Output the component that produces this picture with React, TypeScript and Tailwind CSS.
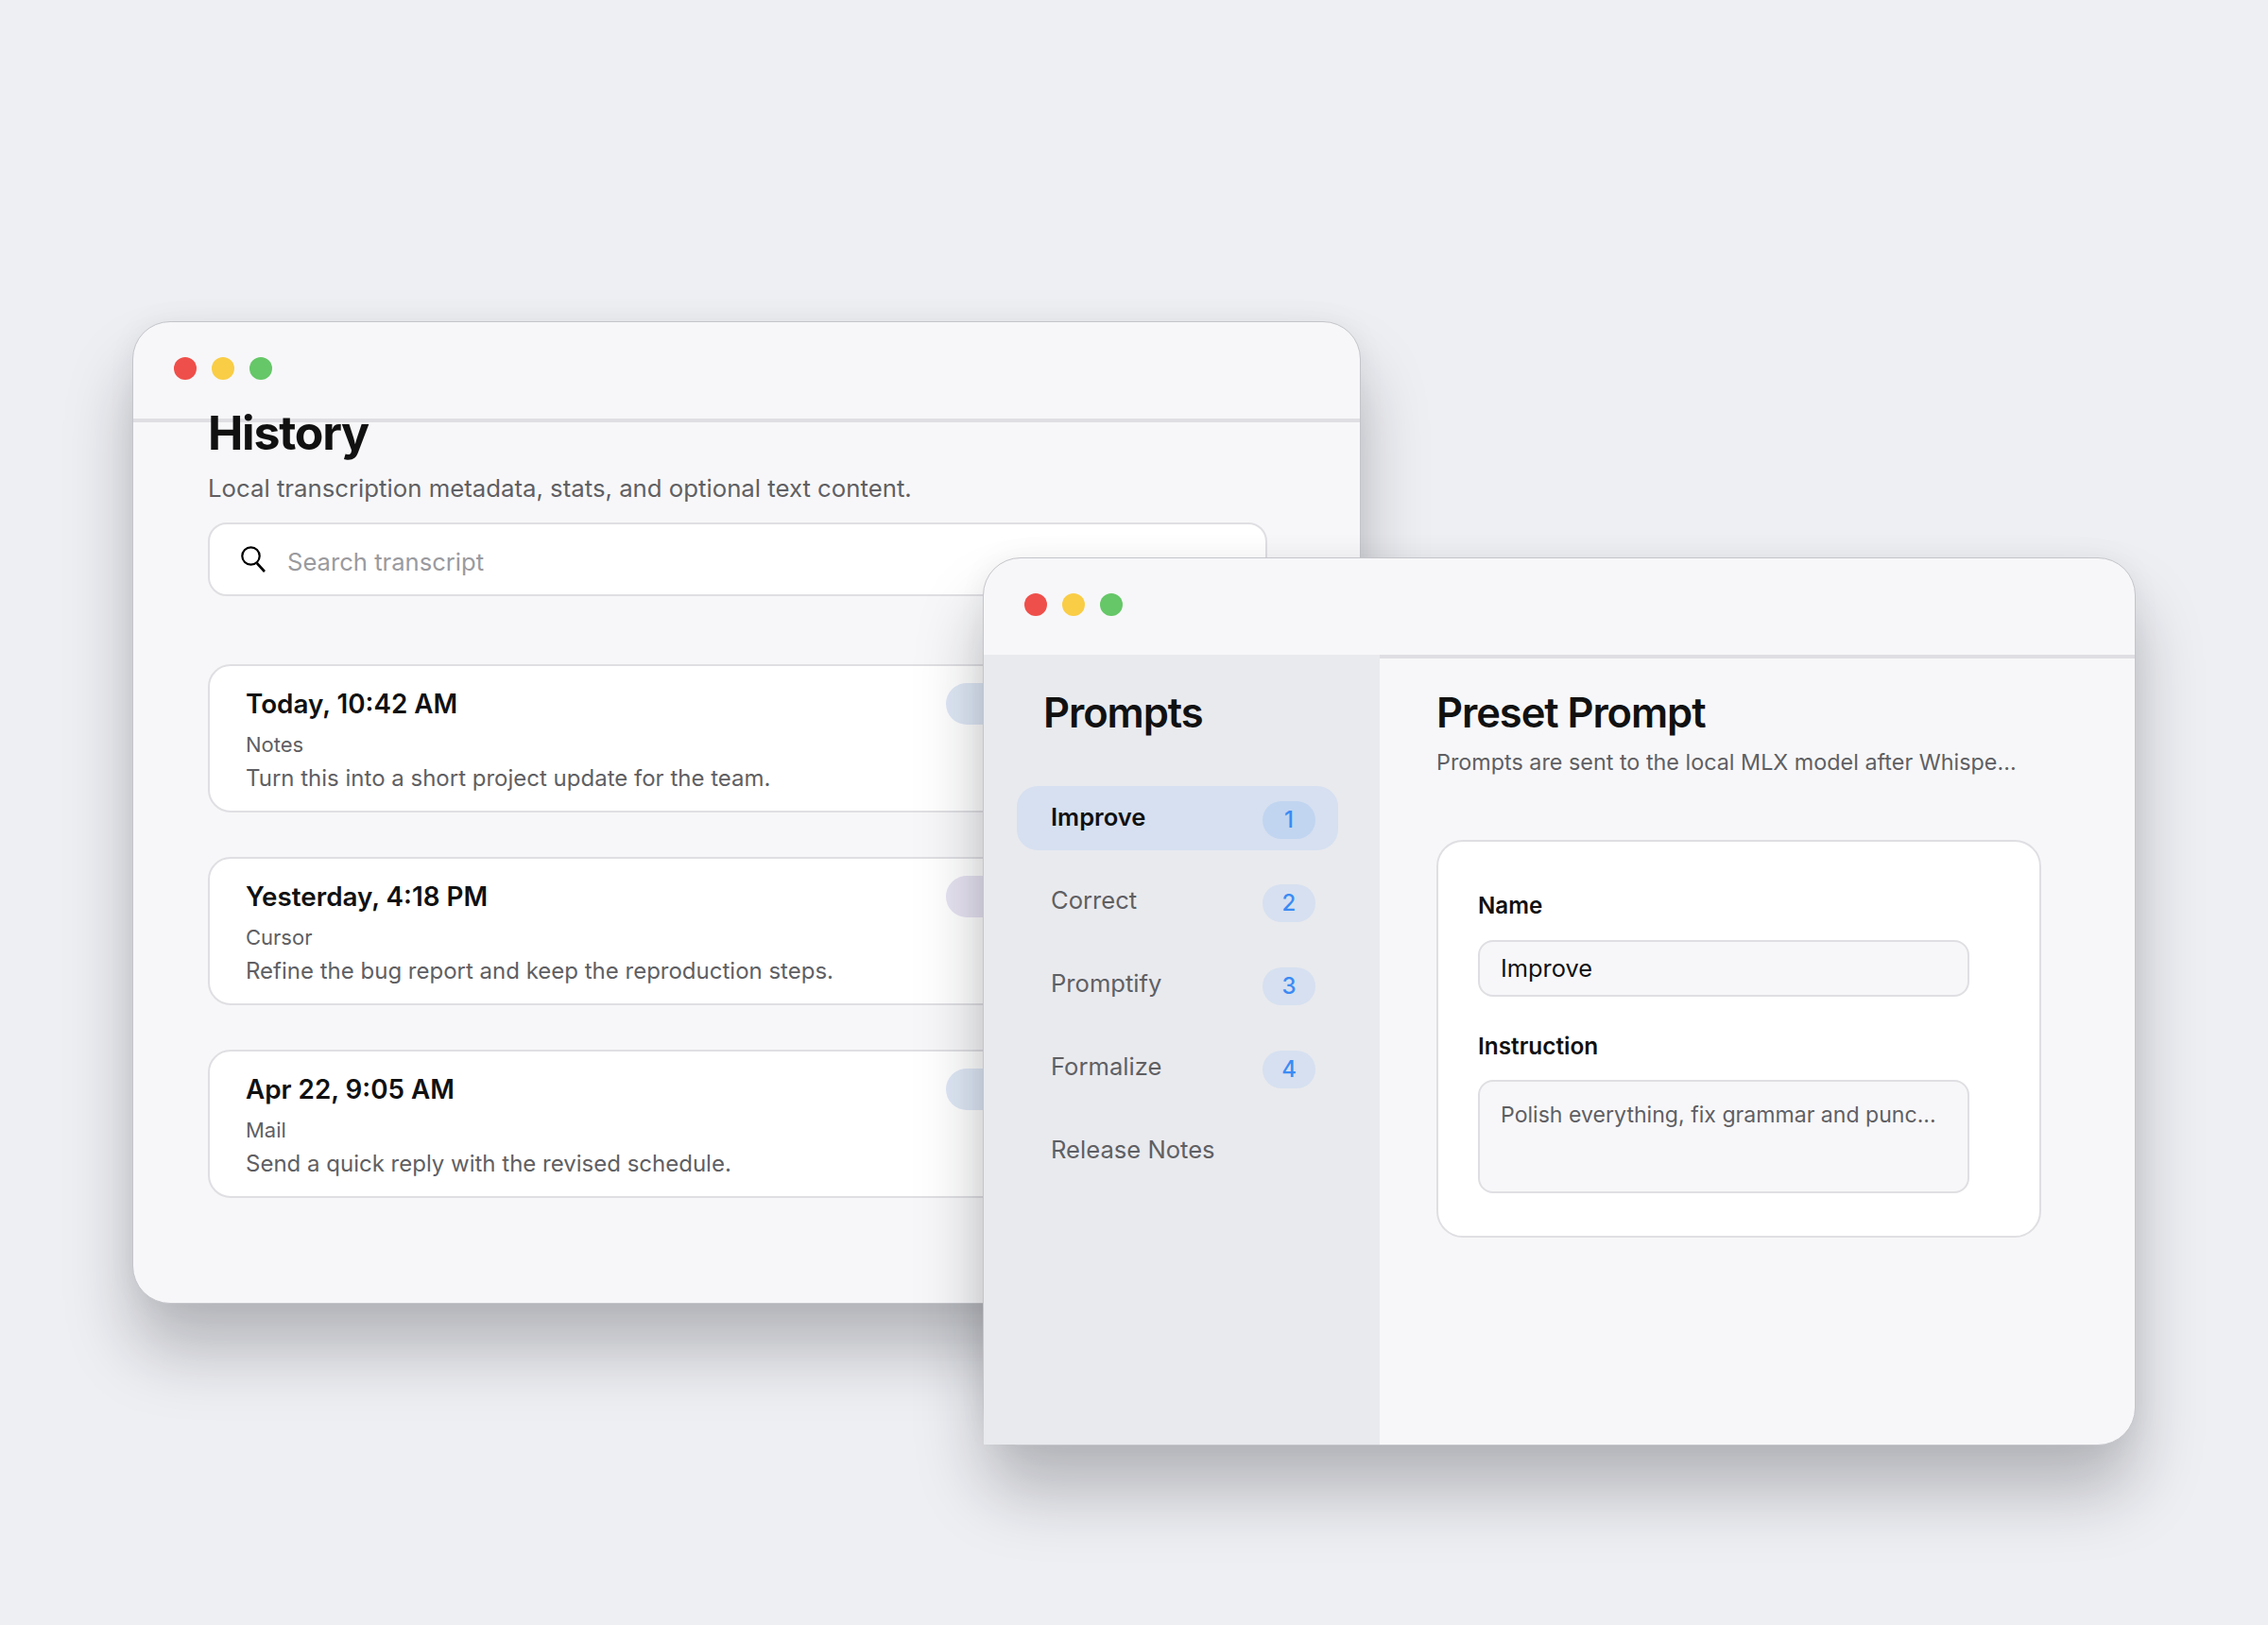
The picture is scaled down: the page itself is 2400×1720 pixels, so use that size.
const history = [
  { title: 'Today, 10:42 AM', app: 'Notes', text: 'Turn this into a short project update for the team.', pill: 'bg-[#dfe8f6]' },
  { title: 'Yesterday, 4:18 PM', app: 'Cursor', text: 'Refine the bug report and keep the reproduction steps.', pill: 'bg-[#e7e3f2]' },
  { title: 'Apr 22, 9:05 AM', app: 'Mail', text: 'Send a quick reply with the revised schedule.', pill: 'bg-[#dfe8f6]' },
];

const prompts = [
  { name: 'Improve', badge: '1' },
  { name: 'Correct', badge: '2' },
  { name: 'Promptify', badge: '3' },
  { name: 'Formalize', badge: '4' },
  { name: 'Release Notes' },
];

function TrafficLights() {
  return (
    <div className="flex gap-4">
      <span className="size-6 rounded-full bg-[#ef4f4a]" />
      <span className="size-6 rounded-full bg-[#f9cd45]" />
      <span className="size-6 rounded-full bg-[#65c767]" />
    </div>
  );
}

function SearchGlyph() {
  return (
    <svg width="26" height="28" viewBox="0 0 26 28" fill="none" stroke="#000" strokeWidth="2.2" className="shrink-0">
      <circle cx="10.5" cy="10.5" r="9.2" />
      <path d="M16.8 18 L25 27" strokeWidth="2.6" />
    </svg>
  );
}

function HistoryWindow() {
  return (
    <div className="absolute left-[140px] top-[340px] flex h-[1040px] w-[1300px] flex-col overflow-hidden rounded-[40px] border border-[#c4c5ca] bg-[#f7f7f9] shadow-[0_50px_70px_rgba(20,22,30,0.26),0_0_30px_rgba(20,22,30,0.05)]">
      <div className="h-[106px] shrink-0 border-b-4 border-[#dfdfe3] pl-[43px] pt-[37px]">
        <TrafficLights />
      </div>
      <div className="-mt-[19px] flex flex-col pl-[79px] pr-[98px]">
        <h1 className="text-[50px] leading-[60px] font-bold tracking-[-0.025em] text-[#111]">History</h1>
        <p className="mt-[12px] text-[25.75px] leading-[34px] text-[#5f5f63]">
          Local transcription metadata, stats, and optional text content.
        </p>
        <div className="mt-[19px] flex h-[78px] items-center gap-[24px] rounded-[20px] border-2 border-[#dfdfe3] bg-white pl-[33px]">
          <SearchGlyph />
          <span className="mt-[6px] -ml-[1px] text-[25.6px] text-[#9a9a9e]">Search transcript</span>
        </div>
        <div className="mt-[72px] flex flex-col gap-[47px]">
          {history.map(item => (
            <div
              key={item.title}
              className="flex h-[157px] justify-between rounded-[24px] border-2 border-[#dfdfe3] bg-white pl-[38px] pr-[38px] pt-[20px]"
            >
              <div className="flex flex-col">
                <div className="text-[27.8px] leading-[40px] font-semibold text-[#111]">{item.title}</div>
                <div className="mt-[8px] text-[22px] leading-[30px] text-[#5f5f63]">{item.app}</div>
                <div className="mt-[3px] text-[24px] leading-[36px] text-[#5f5f63]">{item.text}</div>
              </div>
              <div className={`-mt-[2px] h-[44px] w-[300px] rounded-full ${item.pill}`} />
            </div>
          ))}
        </div>
      </div>
    </div>
  );
}

function PromptsWindow() {
  return (
    <div className="absolute left-[1040px] top-[590px] flex h-[940px] w-[1220px] flex-col rounded-[40px] border border-[#c4c5ca] bg-[#f7f7f9] shadow-[0_50px_70px_rgba(20,22,30,0.26),0_0_30px_rgba(20,22,30,0.05)]">
      <div className="h-[106px] shrink-0 border-b-4 border-[#dfdfe3] pl-[43px] pt-[37px]">
        <TrafficLights />
      </div>
      <div className="-mt-[4px] flex min-h-0 flex-1">
        <aside className="flex w-[419px] shrink-0 flex-col bg-[#e9eaee] pl-[35px] pr-[44px]">
          <h2 className="mt-[33px] pl-[28px] text-[43.5px] leading-[56px] font-semibold tracking-[-0.025em] text-[#111]">Prompts</h2>
          <div className="mt-[50px] flex flex-col gap-5">
            {prompts.map((p, i) => (
              <div
                key={p.name}
                className={`flex h-[68px] items-center justify-between rounded-[22px] pl-[36px] pr-[24px] ${i === 0 ? 'bg-[#d6e0f0]' : ''}`}
              >
                <span className={`pb-[1px] text-[25.6px] ${i === 0 ? 'font-semibold text-[#111]' : 'text-[#5f5f63]'}`}>{p.name}</span>
                {p.badge && (
                  <span
                    className={`mt-1 flex h-10 w-14 items-center justify-center rounded-full text-[24px] font-medium text-[#3b8bf5] ${i === 0 ? 'bg-[#c1d5f0]' : 'bg-[#d6e0f0]'}`}
                  >
                    {p.badge}
                  </span>
                )}
              </div>
            ))}
          </div>
        </aside>
        <main className="flex flex-1 flex-col pl-[60px] pt-[4px]">
          <h2 className="mt-[29px] text-[43.5px] leading-[56px] font-semibold tracking-[-0.025em] text-[#111]">Preset Prompt</h2>
          <p className="mt-[8px] whitespace-nowrap text-[23.35px] leading-[34px] text-[#5f5f63]">
            Prompts are sent to the local MLX model after Whispe...
          </p>
          <div className="mt-[65px] flex h-[421px] w-[640px] flex-col rounded-[28px] border-2 border-[#dfdfe3] bg-white px-[42px] pt-[52px]">
            <label className="text-[24.2px] leading-[32px] font-semibold text-[#111]">Name</label>
            <div className="mt-[20px] flex h-[60px] w-[520px] items-center rounded-[16px] border-2 border-[#dfdfe3] bg-[#f7f7f9] px-[22px] text-[25.4px] text-[#111]">
              Improve
            </div>
            <label className="mt-[36px] text-[24.4px] leading-[32px] font-semibold text-[#111]">Instruction</label>
            <div className="mt-[20px] h-[120px] w-[520px] rounded-[16px] border-2 border-[#dfdfe3] bg-[#f7f7f9] px-[22px] pt-[18px] text-[23.1px] leading-[34px] whitespace-nowrap text-[#5f5f63]">
              Polish everything, fix grammar and punc...
            </div>
          </div>
        </main>
      </div>
    </div>
  );
}

export default function App() {
  return (
    <div className="relative h-[1720px] w-[2400px] overflow-hidden bg-[#eeeff3] font-['Inter',sans-serif]">
      <HistoryWindow />
      <PromptsWindow />
    </div>
  );
}
